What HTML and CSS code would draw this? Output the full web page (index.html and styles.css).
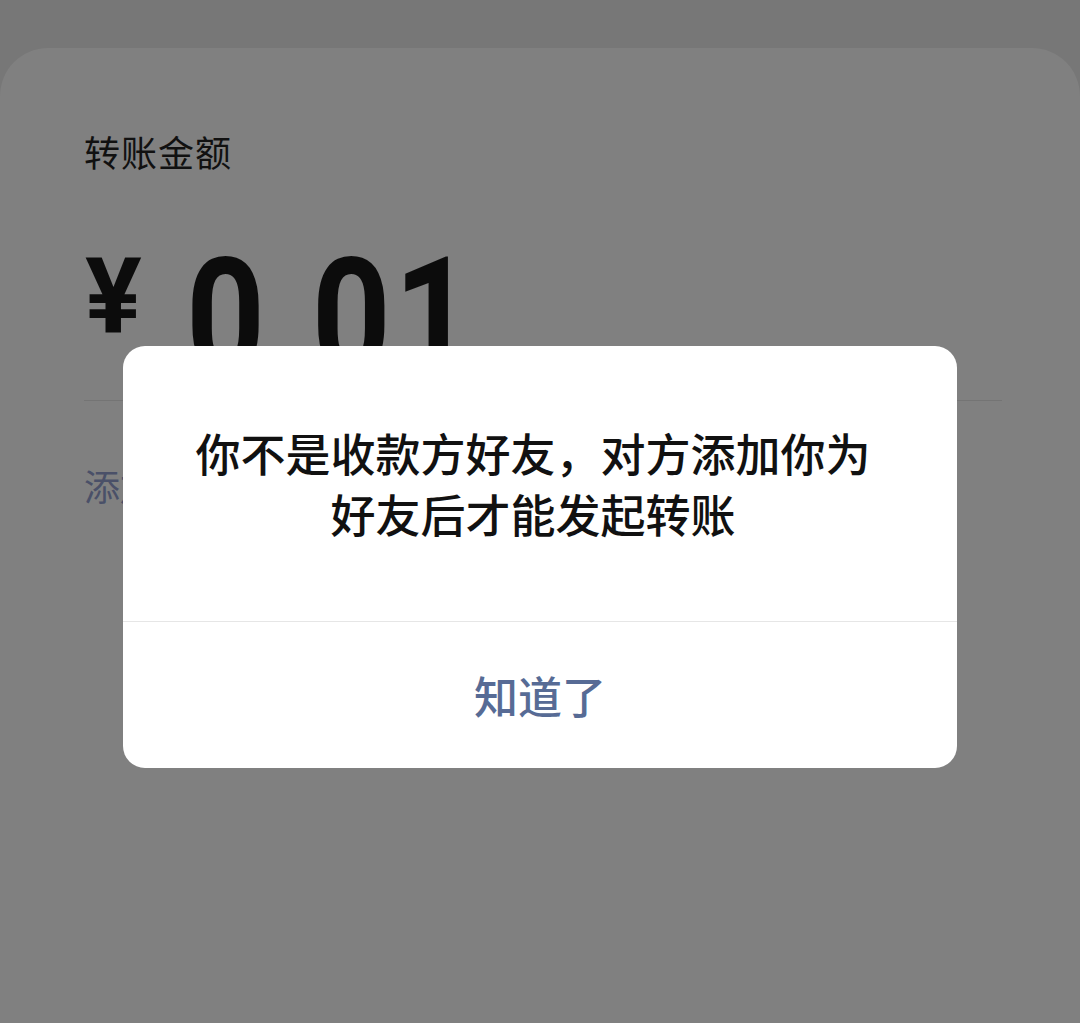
FILE: index.html
```html
<!DOCTYPE html>
<html lang="zh-CN">
<head>
<meta charset="utf-8">
<link rel="stylesheet" href="styles.css">
</head>
<body>
<div class="sheet">
  <div class="label">转账金额</div>
  <div class="amount">
    <span class="yen">¥</span>
    <span class="num">0.01</span>
  </div>
  <div class="divider"></div>
  <div class="note">添加转账说明</div>
</div>
<div class="mask">
  <div class="dialog">
    <div class="dialog-body">你不是收款方好友，对方添加你为<br>好友后才能发起转账</div>
    <div class="dialog-btn">知道了</div>
  </div>
</div>
</body>
</html>
```

FILE: styles.css
```css
html, body {
  margin: 0;
  padding: 0;
  width: 1080px;
  height: 1023px;
  overflow: hidden;
}
body {
  background: #777777;
  font-family: "Noto Sans CJK SC", "Noto Sans", sans-serif;
  position: relative;
}
.sheet {
  margin-top: 48px;
  height: 975px;
  background: #808080;
  border-radius: 48px 48px 0 0;
  padding: 0 78px 0 84px;
  box-sizing: border-box;
  display: flex;
  flex-direction: column;
}
.label {
  margin-top: 79px;
  font-size: 36px;
  line-height: 48px;
  letter-spacing: 1px;
  color: #111111;
}
.amount {
  margin-top: 77px;
  height: 130px;
  display: flex;
  align-items: flex-start;
  color: #0c0c0c;
  font-family: Roboto, "Liberation Sans", sans-serif;
  font-weight: 700;
}
.yen {
  font-size: 106px;
  line-height: 130px;
  margin-top: -20px;
  margin-left: 1px;
  margin-right: 44px;
}
.num {
  display: inline-block;
  font-size: 164px;
  line-height: 130px;
  letter-spacing: 4px;
  transform: scaleX(0.84);
  transform-origin: left center;
}
.divider {
  margin-top: 18px;
  height: 1px;
  background: #747474;
}
.note {
  margin-top: 64px;
  font-size: 36px;
  line-height: 40px;
  color: #4a5068;
}
.mask {
  position: absolute;
  left: 0;
  top: 0;
  width: 1080px;
  height: 1023px;
}
.dialog {
  position: absolute;
  left: 123px;
  top: 346px;
  width: 834px;
  background: #ffffff;
  border-radius: 22px;
  overflow: hidden;
}
.dialog-body {
  height: 276px;
  box-sizing: border-box;
  padding: 76px 14px 0 0;
  text-align: center;
  font-size: 45px;
  font-weight: 500;
  line-height: 61px;
  color: #111111;
  border-bottom: 1px solid #e6e6e6;
}
.dialog-btn {
  height: 146px;
  display: flex;
  align-items: center;
  justify-content: center;
  font-size: 44px;
  font-weight: 500;
  color: #576b95;
}
```
